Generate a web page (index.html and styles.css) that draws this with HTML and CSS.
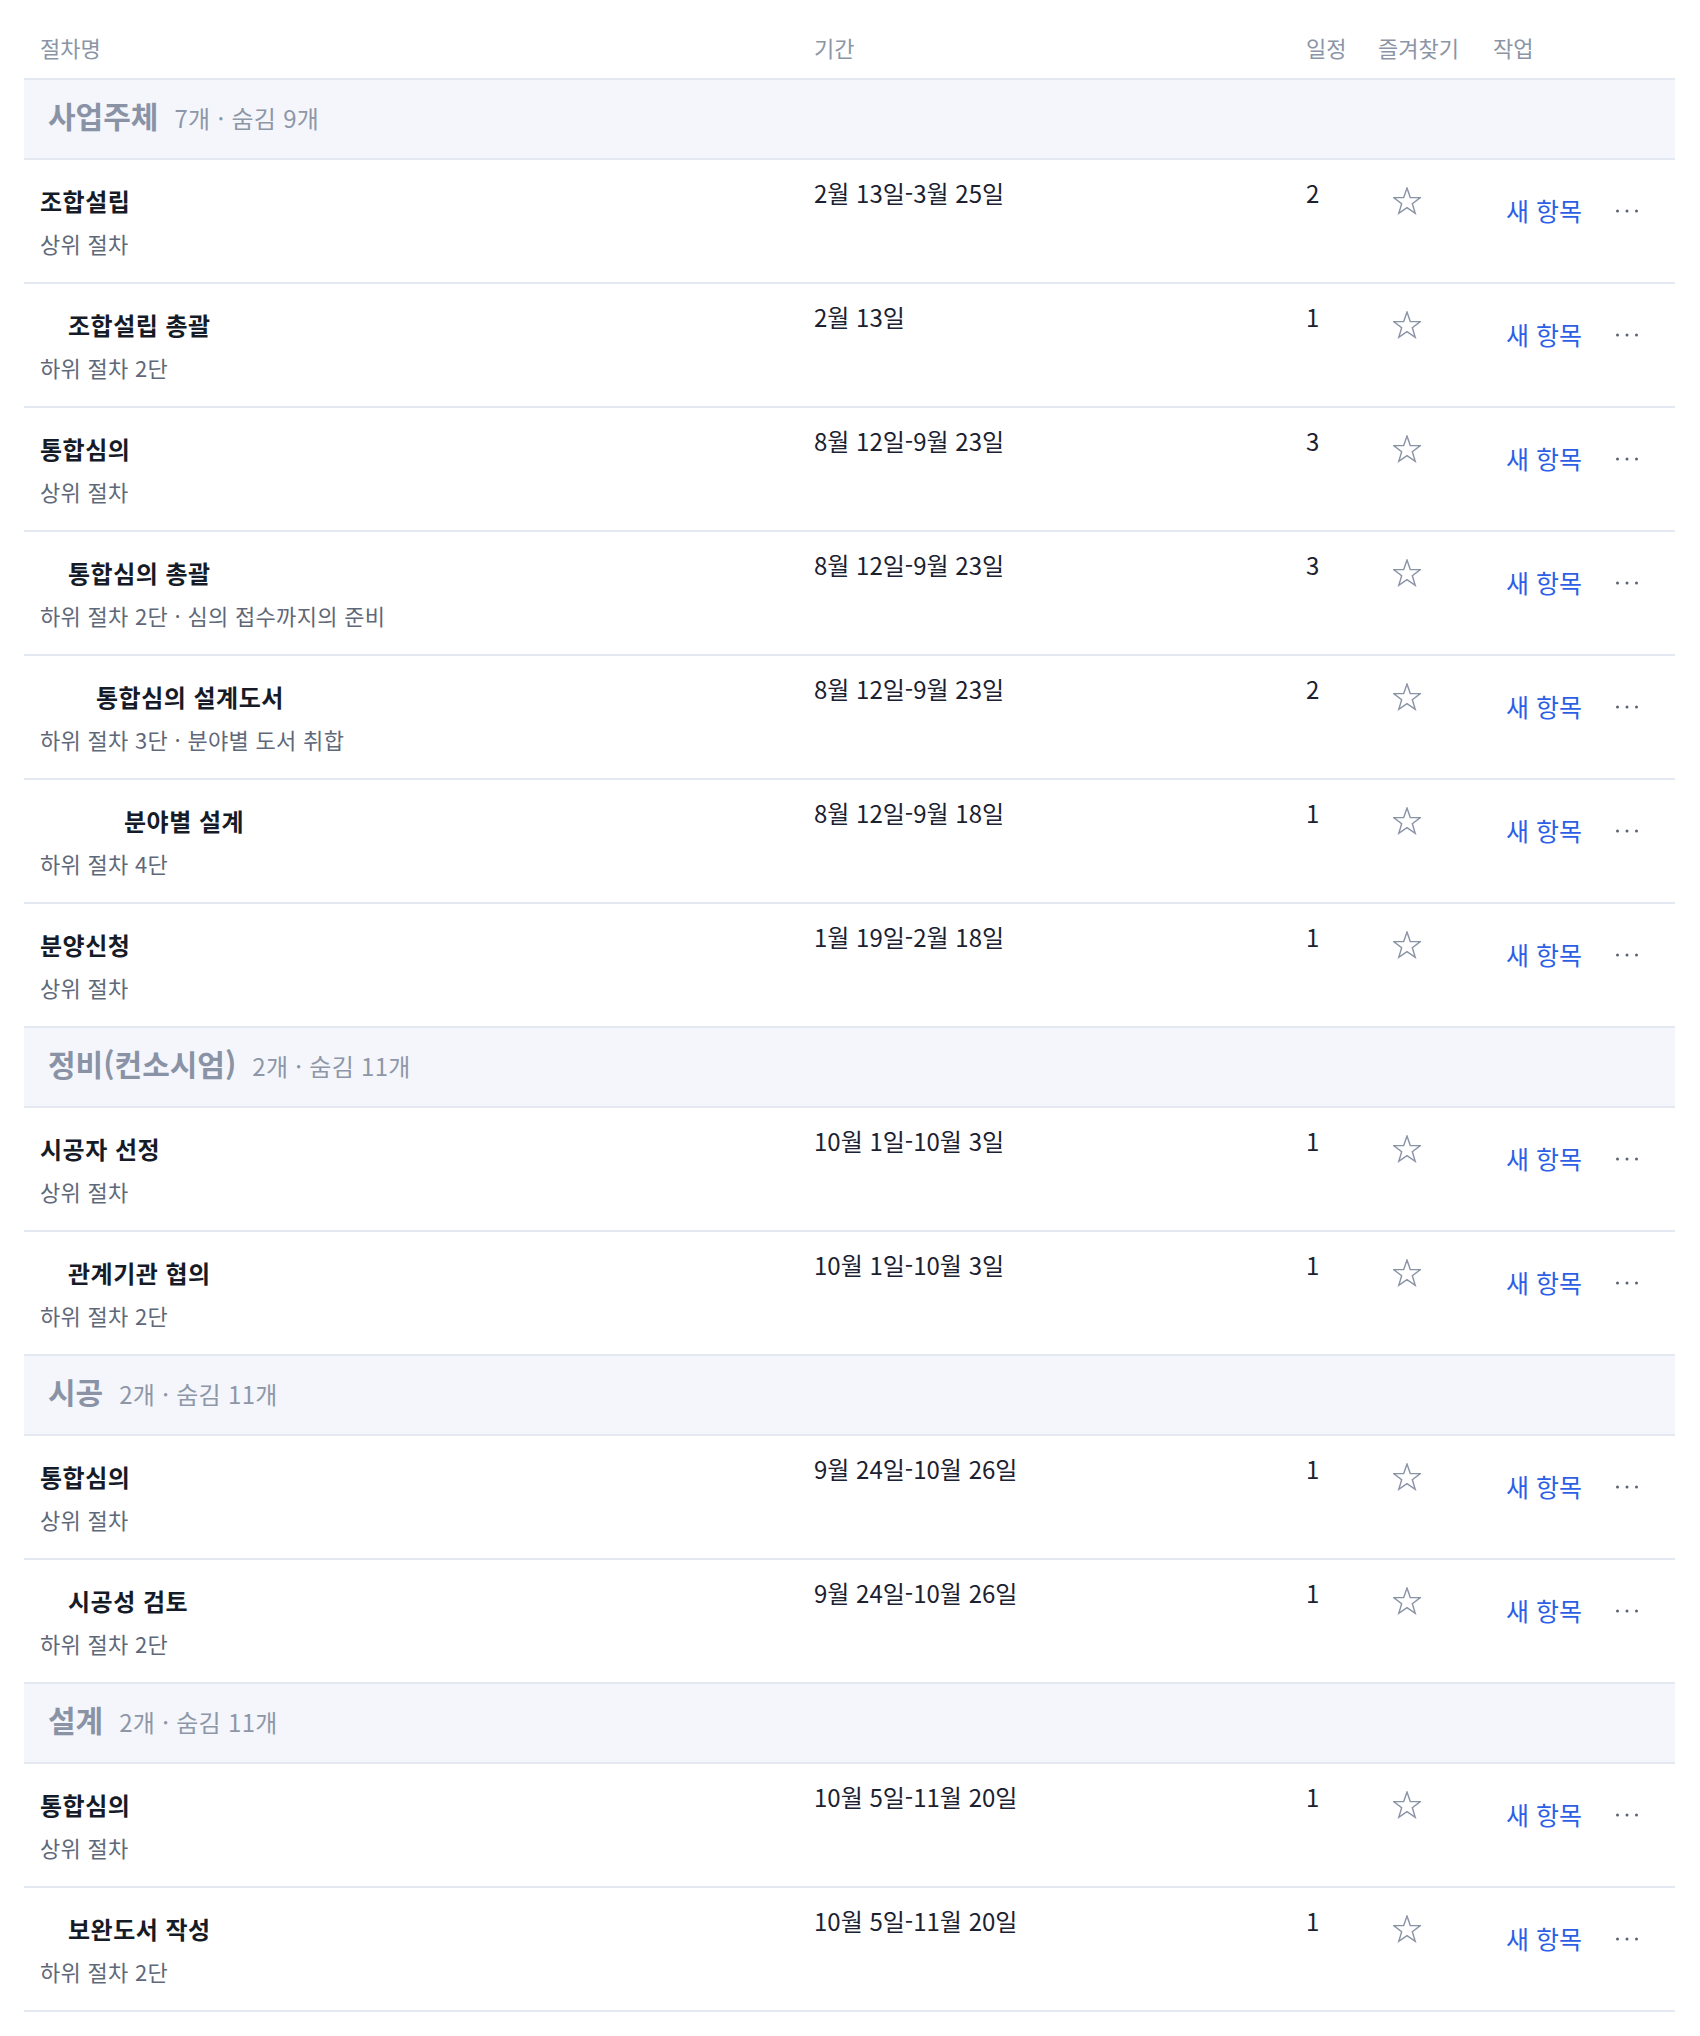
FILE: index.html
```html
<!DOCTYPE html>
<html lang="ko">
<head>
<meta charset="utf-8">
<title>절차 목록</title>
<link rel="stylesheet" href="styles.css">
</head>
<body>
<div class="table">
  <div class="head">
    <div class="hc">절차명</div>
    <div class="hc">기간</div>
    <div class="hc">일정</div>
    <div class="hc">즐겨찾기</div>
    <div class="hc">작업</div>
  </div>

  <div class="group"><span class="g-title">사업주체</span><span class="g-count">7개 · 숨김 9개</span></div>

  <div class="row">
    <div class="name"><div class="title">조합설립</div><div class="sub">상위 절차</div></div>
    <div class="period">2월 13일-3월 25일</div>
    <div class="count">2</div>
    <div class="fav"><svg class="star" width="28" height="28" viewBox="0 0 28 28"><path d="M14 1 L17.29 10.47 L27.31 10.67 L19.33 16.73 L22.23 26.33 L14 20.6 L5.77 26.33 L8.67 16.73 L0.69 10.67 L10.71 10.47 Z"/></svg></div>
    <div class="actions"><span class="new">새 항목</span><svg class="more" width="22" height="4" viewBox="0 0 22 4"><circle cx="1.5" cy="2" r="1.5"/><circle cx="11" cy="2" r="1.5"/><circle cx="20.5" cy="2" r="1.5"/></svg></div>
  </div>

  <div class="row">
    <div class="name"><div class="title lv2">조합설립 총괄</div><div class="sub">하위 절차 2단</div></div>
    <div class="period">2월 13일</div>
    <div class="count">1</div>
    <div class="fav"><svg class="star" width="28" height="28" viewBox="0 0 28 28"><path d="M14 1 L17.29 10.47 L27.31 10.67 L19.33 16.73 L22.23 26.33 L14 20.6 L5.77 26.33 L8.67 16.73 L0.69 10.67 L10.71 10.47 Z"/></svg></div>
    <div class="actions"><span class="new">새 항목</span><svg class="more" width="22" height="4" viewBox="0 0 22 4"><circle cx="1.5" cy="2" r="1.5"/><circle cx="11" cy="2" r="1.5"/><circle cx="20.5" cy="2" r="1.5"/></svg></div>
  </div>

  <div class="row">
    <div class="name"><div class="title">통합심의</div><div class="sub">상위 절차</div></div>
    <div class="period">8월 12일-9월 23일</div>
    <div class="count">3</div>
    <div class="fav"><svg class="star" width="28" height="28" viewBox="0 0 28 28"><path d="M14 1 L17.29 10.47 L27.31 10.67 L19.33 16.73 L22.23 26.33 L14 20.6 L5.77 26.33 L8.67 16.73 L0.69 10.67 L10.71 10.47 Z"/></svg></div>
    <div class="actions"><span class="new">새 항목</span><svg class="more" width="22" height="4" viewBox="0 0 22 4"><circle cx="1.5" cy="2" r="1.5"/><circle cx="11" cy="2" r="1.5"/><circle cx="20.5" cy="2" r="1.5"/></svg></div>
  </div>

  <div class="row">
    <div class="name"><div class="title lv2">통합심의 총괄</div><div class="sub">하위 절차 2단 · 심의 접수까지의 준비</div></div>
    <div class="period">8월 12일-9월 23일</div>
    <div class="count">3</div>
    <div class="fav"><svg class="star" width="28" height="28" viewBox="0 0 28 28"><path d="M14 1 L17.29 10.47 L27.31 10.67 L19.33 16.73 L22.23 26.33 L14 20.6 L5.77 26.33 L8.67 16.73 L0.69 10.67 L10.71 10.47 Z"/></svg></div>
    <div class="actions"><span class="new">새 항목</span><svg class="more" width="22" height="4" viewBox="0 0 22 4"><circle cx="1.5" cy="2" r="1.5"/><circle cx="11" cy="2" r="1.5"/><circle cx="20.5" cy="2" r="1.5"/></svg></div>
  </div>

  <div class="row">
    <div class="name"><div class="title lv3">통합심의 설계도서</div><div class="sub">하위 절차 3단 · 분야별 도서 취합</div></div>
    <div class="period">8월 12일-9월 23일</div>
    <div class="count">2</div>
    <div class="fav"><svg class="star" width="28" height="28" viewBox="0 0 28 28"><path d="M14 1 L17.29 10.47 L27.31 10.67 L19.33 16.73 L22.23 26.33 L14 20.6 L5.77 26.33 L8.67 16.73 L0.69 10.67 L10.71 10.47 Z"/></svg></div>
    <div class="actions"><span class="new">새 항목</span><svg class="more" width="22" height="4" viewBox="0 0 22 4"><circle cx="1.5" cy="2" r="1.5"/><circle cx="11" cy="2" r="1.5"/><circle cx="20.5" cy="2" r="1.5"/></svg></div>
  </div>

  <div class="row">
    <div class="name"><div class="title lv4">분야별 설계</div><div class="sub">하위 절차 4단</div></div>
    <div class="period">8월 12일-9월 18일</div>
    <div class="count">1</div>
    <div class="fav"><svg class="star" width="28" height="28" viewBox="0 0 28 28"><path d="M14 1 L17.29 10.47 L27.31 10.67 L19.33 16.73 L22.23 26.33 L14 20.6 L5.77 26.33 L8.67 16.73 L0.69 10.67 L10.71 10.47 Z"/></svg></div>
    <div class="actions"><span class="new">새 항목</span><svg class="more" width="22" height="4" viewBox="0 0 22 4"><circle cx="1.5" cy="2" r="1.5"/><circle cx="11" cy="2" r="1.5"/><circle cx="20.5" cy="2" r="1.5"/></svg></div>
  </div>

  <div class="row">
    <div class="name"><div class="title">분양신청</div><div class="sub">상위 절차</div></div>
    <div class="period">1월 19일-2월 18일</div>
    <div class="count">1</div>
    <div class="fav"><svg class="star" width="28" height="28" viewBox="0 0 28 28"><path d="M14 1 L17.29 10.47 L27.31 10.67 L19.33 16.73 L22.23 26.33 L14 20.6 L5.77 26.33 L8.67 16.73 L0.69 10.67 L10.71 10.47 Z"/></svg></div>
    <div class="actions"><span class="new">새 항목</span><svg class="more" width="22" height="4" viewBox="0 0 22 4"><circle cx="1.5" cy="2" r="1.5"/><circle cx="11" cy="2" r="1.5"/><circle cx="20.5" cy="2" r="1.5"/></svg></div>
  </div>

  <div class="group"><span class="g-title">정비(컨소시엄)</span><span class="g-count">2개 · 숨김 11개</span></div>

  <div class="row">
    <div class="name"><div class="title">시공자 선정</div><div class="sub">상위 절차</div></div>
    <div class="period">10월 1일-10월 3일</div>
    <div class="count">1</div>
    <div class="fav"><svg class="star" width="28" height="28" viewBox="0 0 28 28"><path d="M14 1 L17.29 10.47 L27.31 10.67 L19.33 16.73 L22.23 26.33 L14 20.6 L5.77 26.33 L8.67 16.73 L0.69 10.67 L10.71 10.47 Z"/></svg></div>
    <div class="actions"><span class="new">새 항목</span><svg class="more" width="22" height="4" viewBox="0 0 22 4"><circle cx="1.5" cy="2" r="1.5"/><circle cx="11" cy="2" r="1.5"/><circle cx="20.5" cy="2" r="1.5"/></svg></div>
  </div>

  <div class="row">
    <div class="name"><div class="title lv2">관계기관 협의</div><div class="sub">하위 절차 2단</div></div>
    <div class="period">10월 1일-10월 3일</div>
    <div class="count">1</div>
    <div class="fav"><svg class="star" width="28" height="28" viewBox="0 0 28 28"><path d="M14 1 L17.29 10.47 L27.31 10.67 L19.33 16.73 L22.23 26.33 L14 20.6 L5.77 26.33 L8.67 16.73 L0.69 10.67 L10.71 10.47 Z"/></svg></div>
    <div class="actions"><span class="new">새 항목</span><svg class="more" width="22" height="4" viewBox="0 0 22 4"><circle cx="1.5" cy="2" r="1.5"/><circle cx="11" cy="2" r="1.5"/><circle cx="20.5" cy="2" r="1.5"/></svg></div>
  </div>

  <div class="group"><span class="g-title">시공</span><span class="g-count">2개 · 숨김 11개</span></div>

  <div class="row">
    <div class="name"><div class="title">통합심의</div><div class="sub">상위 절차</div></div>
    <div class="period">9월 24일-10월 26일</div>
    <div class="count">1</div>
    <div class="fav"><svg class="star" width="28" height="28" viewBox="0 0 28 28"><path d="M14 1 L17.29 10.47 L27.31 10.67 L19.33 16.73 L22.23 26.33 L14 20.6 L5.77 26.33 L8.67 16.73 L0.69 10.67 L10.71 10.47 Z"/></svg></div>
    <div class="actions"><span class="new">새 항목</span><svg class="more" width="22" height="4" viewBox="0 0 22 4"><circle cx="1.5" cy="2" r="1.5"/><circle cx="11" cy="2" r="1.5"/><circle cx="20.5" cy="2" r="1.5"/></svg></div>
  </div>

  <div class="row">
    <div class="name"><div class="title lv2">시공성 검토</div><div class="sub">하위 절차 2단</div></div>
    <div class="period">9월 24일-10월 26일</div>
    <div class="count">1</div>
    <div class="fav"><svg class="star" width="28" height="28" viewBox="0 0 28 28"><path d="M14 1 L17.29 10.47 L27.31 10.67 L19.33 16.73 L22.23 26.33 L14 20.6 L5.77 26.33 L8.67 16.73 L0.69 10.67 L10.71 10.47 Z"/></svg></div>
    <div class="actions"><span class="new">새 항목</span><svg class="more" width="22" height="4" viewBox="0 0 22 4"><circle cx="1.5" cy="2" r="1.5"/><circle cx="11" cy="2" r="1.5"/><circle cx="20.5" cy="2" r="1.5"/></svg></div>
  </div>

  <div class="group"><span class="g-title">설계</span><span class="g-count">2개 · 숨김 11개</span></div>

  <div class="row">
    <div class="name"><div class="title">통합심의</div><div class="sub">상위 절차</div></div>
    <div class="period">10월 5일-11월 20일</div>
    <div class="count">1</div>
    <div class="fav"><svg class="star" width="28" height="28" viewBox="0 0 28 28"><path d="M14 1 L17.29 10.47 L27.31 10.67 L19.33 16.73 L22.23 26.33 L14 20.6 L5.77 26.33 L8.67 16.73 L0.69 10.67 L10.71 10.47 Z"/></svg></div>
    <div class="actions"><span class="new">새 항목</span><svg class="more" width="22" height="4" viewBox="0 0 22 4"><circle cx="1.5" cy="2" r="1.5"/><circle cx="11" cy="2" r="1.5"/><circle cx="20.5" cy="2" r="1.5"/></svg></div>
  </div>

  <div class="row">
    <div class="name"><div class="title lv2">보완도서 작성</div><div class="sub">하위 절차 2단</div></div>
    <div class="period">10월 5일-11월 20일</div>
    <div class="count">1</div>
    <div class="fav"><svg class="star" width="28" height="28" viewBox="0 0 28 28"><path d="M14 1 L17.29 10.47 L27.31 10.67 L19.33 16.73 L22.23 26.33 L14 20.6 L5.77 26.33 L8.67 16.73 L0.69 10.67 L10.71 10.47 Z"/></svg></div>
    <div class="actions"><span class="new">새 항목</span><svg class="more" width="22" height="4" viewBox="0 0 22 4"><circle cx="1.5" cy="2" r="1.5"/><circle cx="11" cy="2" r="1.5"/><circle cx="20.5" cy="2" r="1.5"/></svg></div>
  </div>
</div>
</body>
</html>
```

FILE: styles.css
```css
* { box-sizing: border-box; }

html, body {
  margin: 0;
  background: #ffffff;
}

body {
  padding: 24px 25px 24px 24px;
  font-family: "Noto Sans CJK KR", "Noto Sans", sans-serif;
  color: #1b2130;
}

.table {
  width: 1651px;
}

.head,
.row {
  display: grid;
  grid-template-columns: 774px 492px 72px 115px 198px;
}

.head {
  padding: 8px 0 16px;
  border-bottom: 2px solid #e4e8f1;
}

.hc {
  padding: 0 16px;
  font-size: 22px;
  line-height: 30px;
  white-space: nowrap;
  color: #8b95a6;
}

.group {
  display: flex;
  align-items: baseline;
  gap: 16px;
  height: 80px;
  padding: 14px 24px 0;
  background: #f4f6fb;
  border-bottom: 2px solid #e4e8f1;
}

.g-title {
  font-size: 30px;
  line-height: 42px;
  font-weight: 700;
  color: #8a93a6;
}

.g-count {
  font-size: 24px;
  line-height: 33px;
  letter-spacing: 0.3px;
  color: #8e97a8;
}

.row {
  align-items: start;
  border-bottom: 2px solid #e4e8f1;
}

.name {
  padding: 24px 16px 24px;
}

.title {
  font-size: 24px;
  line-height: 33px;
  letter-spacing: 0.5px;
  font-weight: 700;
  color: #151b27;
}

.title.lv2 { padding-left: 28px; }
.title.lv3 { padding-left: 56px; }
.title.lv4 { padding-left: 84px; }

.sub {
  margin-top: 11px;
  font-size: 22px;
  line-height: 30px;
  letter-spacing: 0.3px;
  color: #5f6878;
}

.period,
.count {
  padding: 16px 16px 0;
  font-size: 24px;
  line-height: 33px;
  white-space: nowrap;
  color: #1b2130;
}

.fav {
  padding: 27px 0 0 31px;
}

.star {
  display: block;
  fill: none;
  stroke: #8a93a6;
  stroke-width: 1.4;
  stroke-linejoin: miter;
}

.actions {
  display: flex;
  align-items: center;
  gap: 34px;
  padding: 34px 16px 0 29px;
}

.new {
  font-size: 25px;
  line-height: 33px;
  white-space: nowrap;
  color: #2d5fe6;
}

.more {
  display: block;
  fill: #5b6474;
}
```
